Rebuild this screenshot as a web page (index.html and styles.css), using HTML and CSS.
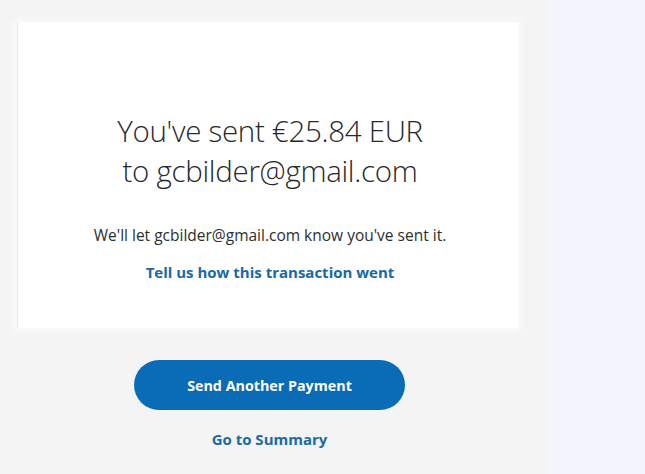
FILE: index.html
```html
<!DOCTYPE html>
<html lang="en">
<head>
<meta charset="utf-8">
<title>Payment sent</title>
<link rel="stylesheet" href="styles.css">
</head>
<body>
<div class="page">
  <main class="main">
    <section class="card">
      <h1 class="title">You've sent €25.84 EUR<br>to gcbilder@gmail.com</h1>
      <p class="note">We'll let gcbilder@gmail.com know you've sent it.</p>
      <a class="feedback" href="#">Tell us how this transaction went</a>
    </section>
    <div class="actions">
      <a class="btn-primary" href="#">Send Another Payment</a>
      <a class="summary" href="#">Go to Summary</a>
    </div>
  </main>
  <aside class="side"></aside>
</div>
</body>
</html>
```
FILE: styles.css
```css
* { box-sizing: border-box; }
html, body { margin: 0; padding: 0; height: 100%; }
body {
  font-family: "Open Sans", "Liberation Sans", sans-serif;
  background: #f5f5f7;
  color: #2c2e2f;
}
.page {
  display: flex;
  width: 645px;
  height: 474px;
  overflow: hidden;
}
.main {
  width: 548px;
  background: #f4f4f5;
  padding: 23px 30px 0 17px;
  display: flex;
  flex-direction: column;
}
.side {
  flex: 1;
  background: #f3f4fc;
}
.card {
  background: #ffffff;
  height: 305px;
  box-shadow: 0 0 8px 2px rgba(255,255,255,0.9);
  border-left: 1px solid #e6e6ea;
  display: flex;
  flex-direction: column;
  align-items: center;
  padding-top: 88px;
}
.title {
  margin: 0;
  font-weight: 300;
  font-size: 29.5px;
  line-height: 40px;
  text-align: center;
  color: #262829;
  letter-spacing: -0.3px;
  padding-left: 4px;
}
.note {
  margin: 34px 0 0;
  font-size: 15.5px;
  line-height: 20px;
  color: #2c2e2f;
  padding-left: 4px;
}
.feedback {
  margin-top: 17px;
  font-size: 15px;
  font-weight: 700;
  line-height: 20px;
  color: #1769a6;
  text-decoration: none;
  padding-left: 4px;
}
.actions {
  display: flex;
  flex-direction: column;
  align-items: center;
  padding-top: 32px;
  padding-left: 4px;
}
.btn-primary {
  width: 271px;
  height: 50px;
  border-radius: 25px;
  background: #0a6cb7;
  color: #ffffff;
  font-weight: 700;
  font-size: 14.3px;
  display: flex;
  align-items: center;
  justify-content: center;
  text-decoration: none;
}
.summary {
  margin-top: 19px;
  font-weight: 700;
  font-size: 15px;
  color: #1a6aa3;
  text-decoration: none;
}
```
